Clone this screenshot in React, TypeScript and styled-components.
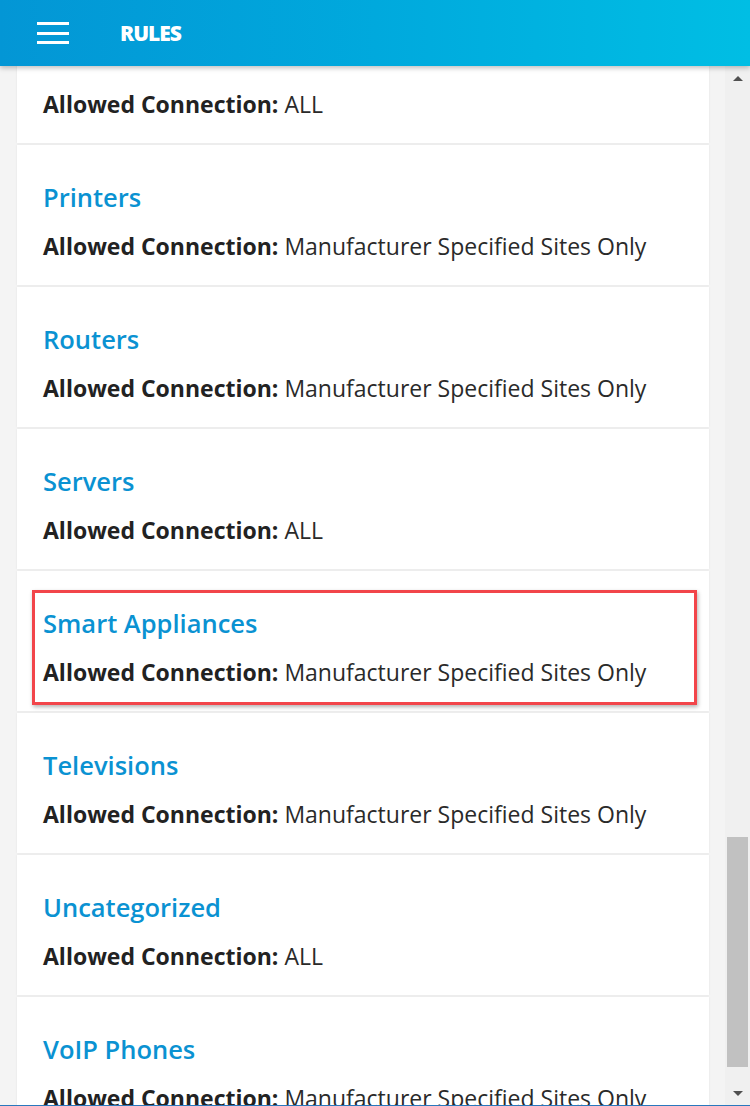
import React, { useLayoutEffect, useRef } from "react";
import styled, { createGlobalStyle } from "styled-components";

const GlobalStyle = createGlobalStyle`
	html, body {
		margin: 0;
		padding: 0;
		background: #f4f4f4;
	}
	* {
		box-sizing: border-box;
	}
`;

const Page = styled.div`
	width: 750px;
	height: 1106px;
	display: flex;
	flex-direction: column;
	font-family: "Open Sans", "Noto Sans", sans-serif;
	background: #f4f4f4;
	overflow: hidden;
	border-bottom: 1px solid #2a78bd;
`;

const Header = styled.header`
	height: 66px;
	flex: 0 0 66px;
	display: flex;
	align-items: center;
	padding-left: 37px;
	gap: 51px;
	background: linear-gradient(90deg, #0396d5 0%, #00a9dd 50%, #00bee4 100%);
	box-shadow: 0 2px 5px rgba(0, 0, 0, 0.25);
	position: relative;
	z-index: 2;
`;

const MenuButton = styled.button`
	width: 32px;
	height: 22px;
	padding: 0;
	border: none;
	background: none;
	display: flex;
	flex-direction: column;
	justify-content: space-between;
	cursor: pointer;

	span {
		display: block;
		height: 3px;
		background: #fff;
	}
`;

const Title = styled.h1`
	margin: 0;
	color: #fff;
	font-size: 21px;
	font-weight: 800;
	letter-spacing: -1px;
`;

const Body = styled.div`
	flex: 1;
	display: flex;
	min-height: 0;
`;

const Viewport = styled.div`
	flex: 1;
	overflow: hidden;
	padding: 0 16px 0 17px;
`;

const List = styled.div`
	display: flex;
	flex-direction: column;
	gap: 2px;
`;

const Card = styled.div`
	position: relative;
	height: 140px;
	background: #fff;
	padding: 34px 26px 0;
	box-shadow: 0 0 2px rgba(0, 0, 0, 0.08);
`;

const CardTitle = styled.h2`
	margin: 0;
	color: #0a92d2;
	font-size: 25.5px;
	font-weight: 600;
	line-height: 36px;
`;

const CardText = styled.p`
	margin: 15px 0 0;
	color: #2a2a2a;
	font-size: 23px;
	line-height: 32px;
	white-space: nowrap;

	b {
		font-weight: 700;
		color: #222;
	}
`;

const Highlight = styled.div`
	position: absolute;
	left: 15px;
	top: 19px;
	right: 12px;
	bottom: 6px;
	border: 3px solid #f2454a;
	box-shadow: 1px 2px 4px rgba(0, 0, 0, 0.3);
	pointer-events: none;
`;

const Scrollbar = styled.div`
	width: 25px;
	display: flex;
	flex-direction: column;
	align-items: center;
	background: #f0f0f0;
`;

const Arrow = styled.div<{ $down?: boolean }>`
	height: 24px;
	flex: 0 0 24px;
	display: flex;
	align-items: center;
	justify-content: center;

	&::after {
		content: "";
		border-left: 5px solid transparent;
		border-right: 5px solid transparent;
		${p =>
			p.$down
				? "border-top: 5px solid #505050;"
				: "border-bottom: 5px solid #505050;"}
	}
`;

const Track = styled.div`
	flex: 1;
	width: 100%;
	display: flex;
	flex-direction: column;
	justify-content: flex-end;
	padding: 0 2px 14px 2px;
`;

const Thumb = styled.div`
	height: 230px;
	background: #c1c1c1;
`;

interface Rule {
	name: string;
	allowed: string;
	highlighted?: boolean;
}

const SITES = "Manufacturer Specified Sites Only";

const rules: Rule[] = [
	{ name: "Mobile Devices", allowed: "ALL" },
	{ name: "Printers", allowed: SITES },
	{ name: "Routers", allowed: SITES },
	{ name: "Servers", allowed: "ALL" },
	{ name: "Smart Appliances", allowed: SITES, highlighted: true },
	{ name: "Televisions", allowed: SITES },
	{ name: "Uncategorized", allowed: "ALL" },
	{ name: "VoIP Phones", allowed: SITES },
	{ name: "Wearables", allowed: SITES },
];

const App = () => {
	const viewRef = useRef<HTMLDivElement>(null);

	useLayoutEffect(() => {
		if (viewRef.current) viewRef.current.scrollTop = 63;
	}, []);

	return (
		<Page>
			<GlobalStyle />
			<Header>
				<MenuButton aria-label='menu'>
					<span />
					<span />
					<span />
				</MenuButton>
				<Title>RULES</Title>
			</Header>
			<Body>
				<Viewport ref={viewRef}>
					<List>
						{rules.map(rule => (
							<Card key={rule.name}>
								<CardTitle>{rule.name}</CardTitle>
								<CardText>
									<b>Allowed Connection:</b> {rule.allowed}
								</CardText>
								{rule.highlighted && <Highlight />}
							</Card>
						))}
					</List>
				</Viewport>
				<Scrollbar>
					<Arrow />
					<Track>
						<Thumb />
					</Track>
					<Arrow $down />
				</Scrollbar>
			</Body>
		</Page>
	);
};

export default App;
